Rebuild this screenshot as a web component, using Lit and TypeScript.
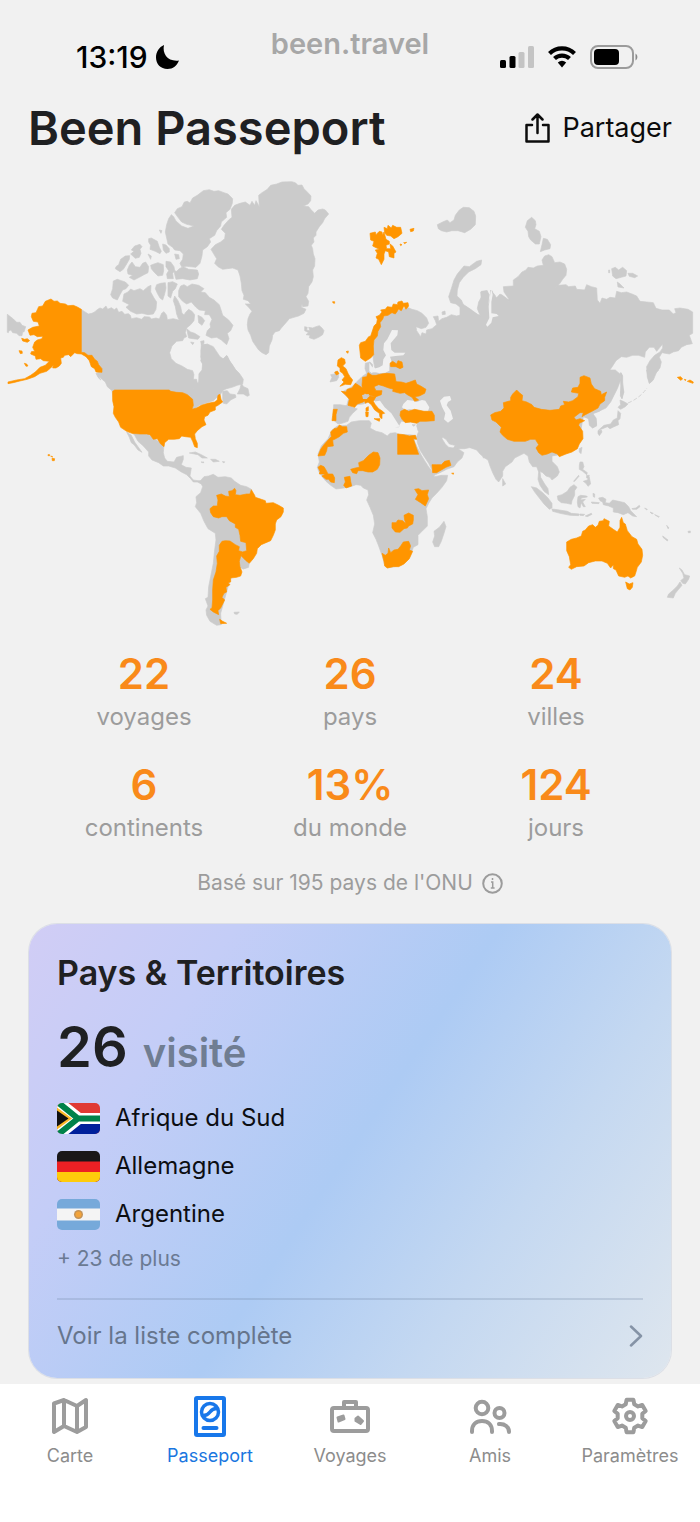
import { LitElement, html, svg, css } from "lit";
import { customElement, property } from "lit/decorators.js";

/** One sheet of the world map. Shapes are polygons on a grid three times finer than the map. */
interface Sheet {
  x: number;
  y: number;
  land?: string[];
  water?: string[];
  visited?: string[];
}

const SHEETS: Sheet[] = [
  {
    // Alaska and northern Canada
    x: 0,
    y: 170,
    land: [
      "22,433 40,447 50,457 60,457 66,466 77,470 72,486 68,485 66,497 57,497 50,490 38,488 33,480 27,482 25,488 22,487",
      "243,418 254,425 265,432 276,430 285,425 293,418 300,414 308,417 318,408 323,418 334,413 343,419 350,414 356,427 366,424 374,433 385,431 391,436 394,446 410,443 425,448 432,440 448,441 455,447 468,444 478,447 485,430 492,425 500,436 502,449 520,446 535,450 548,446 556,428 566,418 576,424 584,434 582,452 572,464 560,474 556,488 560,500 552,504 548,512 530,514 516,528 509,548 514,566 528,580 546,588 562,598 578,602 582,614 580,628 590,628 592,638 597,638 597,612 608,602 609,584 602,572 606,560 603,542 606,526 622,522 640,530 650,545 660,560 672,568 682,558 692,578 704,596 714,612 722,630 722,640 690,648 672,655 665,668 655,682 610,692 580,722 345,722 336,662 322,650 316,636 304,626 290,610 300,604 280,560 243,548",
      "610,62 628,59 642,64 656,62 672,68 684,72 698,86 697,100 690,118 678,128 680,142 664,156 662,168 650,182 644,196 628,206 632,216 622,230 608,240 606,258 600,280 588,292 560,289 545,290 540,280 548,268 550,252 540,242 524,240 518,232 504,222 500,204 496,186 500,164 506,146 514,134 521,140 528,153 545,168 564,175 582,168 560,163 545,156 534,142 524,128 532,116 546,110 553,96 562,94 570,99 578,84 592,76",
      "538,296 550,290 566,298 592,300 596,312 592,326 570,330 548,326 528,328 524,312 522,302 530,304",
      "446,206 454,204 472,214 478,232 484,244 480,251 466,244 450,238 452,226 446,216",
      "488,222 498,225 508,236 508,246 498,250 490,240",
      "394,240 404,228 420,223 426,230 420,238 423,250 418,262 406,265 392,252 402,244",
      "348,290 356,284 362,268 376,258 389,257 388,268 380,282 370,298 360,305 346,296",
      "382,300 388,286 396,276 406,290 420,292 428,280 437,276 446,290 444,308 432,314 418,322 402,330 388,322 398,316 384,312",
      "452,286 462,282 474,278 490,284 491,302 488,316 474,318 462,306 454,296",
      "498,274 512,276 522,290 524,302 518,310 520,326 502,326 500,312 506,302 498,290",
      "340,333 352,328 364,332 376,336 386,346 378,356 368,360 360,374 352,390 338,384 332,374 338,356",
      "372,372 384,366 392,357 402,362 420,356 430,362 444,350 453,346 452,366 462,384 470,396 468,418 460,432 444,434 426,430 410,432 392,424 378,412 388,404 368,394",
      "470,344 482,340 496,338 498,354 494,372 488,390 480,384 472,370 466,356",
      "504,338 518,335 532,342 526,356 518,364 512,384 504,378 504,358",
      "524,378 534,392 542,410 546,430 560,440 552,450 536,448 530,432 526,410 520,392",
      "542,348 552,344 562,350 576,342 596,346 612,356 602,366 616,368 628,382 642,390 658,404 664,422 668,436 686,450 699,466 692,482 682,490 687,506 680,524 664,510 650,502 634,504 618,496 622,482 632,472 630,462 636,448 628,434 614,434 616,422 598,420 588,412 574,396 560,402 548,394 536,380 536,362",
      "560,476 572,486 584,490 600,500 594,508 578,506 566,504",
      "594,436 606,442 614,452 606,466 596,458",
      "602,514 612,512 612,520 604,524",
      "572,516 582,518 578,524",
      "478,180 486,182 483,190",
      "444,252 454,258 452,268",
      "524,252 536,254 538,266 528,268",
      "288,610 296,616 302,630 294,622",
    ],
    visited: [
      "153,387 162,394 172,393 180,400 196,402 204,407 220,406 232,411 244,418 244,547 254,548 264,556 276,556 284,568 292,574 296,584 306,596 306,607 288,606 284,596 274,590 268,572 258,560 244,552 232,551 224,548 212,560 206,554 194,556 190,562 182,564 184,580 178,588 168,594 158,594 160,586 152,594 140,604 120,610 104,620 82,628 60,633 40,638 24,641 24,636 50,630 74,626 92,616 106,606 120,592 136,586 148,574 130,572 122,566 108,568 106,558 92,552 94,545 104,544 98,532 104,516 112,510 126,506 128,499 112,500 102,494 90,496 84,480 98,472 118,468 114,456 100,454 94,440 96,430 108,428 116,410 128,408 136,394",
      "65,505 74,508 82,506 89,512 82,517 68,513",
      "57,542 66,543 67,550 61,551",
      "73,580 80,582 84,588 78,589",
    ],
  },
  {
    // Greenland, Iceland and Labrador
    x: 180,
    y: 170,
    land: [
      "335,35 346,38 354,46 366,45 372,56 384,68 393,78 392,92 384,102 370,108 386,110 394,120 404,130 414,120 428,117 436,120 446,132 434,146 428,158 418,170 408,186 408,196 400,204 402,216 394,226 398,236 400,252 405,266 404,288 398,300 400,320 396,336 386,350 384,370 378,380 386,394 384,408 368,410 366,402 364,412 378,418 372,430 356,438 342,442 328,446 318,458 304,474 298,482 285,486 278,496 276,510 268,528 266,548 258,554 246,548 236,540 226,526 218,514 212,496 204,480 202,464 204,446 210,432 216,424 206,412 196,402 212,402 204,392 190,388 192,376 186,362 184,340 180,318 174,300 158,294 142,296 128,298 114,290 104,280 110,266 100,250 93,238 106,224 122,216 134,206 136,190 124,178 132,166 146,150 156,142 154,118 164,106 180,100 196,96 210,106 216,94 224,106 228,92 238,110 236,76 246,68 262,58 272,46 290,42 306,36",
      "374,470 382,472 380,480 390,482 386,472 398,474 408,470 418,467 426,474 432,482 428,494 416,502 402,508 388,503 390,496 378,494 386,488 374,482",
      "64,522 80,524 94,532 104,548 118,560 128,568 140,556 146,570 156,582 166,598 178,610 190,628 188,642 172,646 156,652 140,656 122,664 112,680 100,692 40,712 34,662 56,640 58,610 66,600 68,580 62,562",
      "128,664 142,662 150,672 166,674 168,682 152,690 140,702 130,700 128,686",
      "184,640 191,650 204,656 208,676 202,679 190,672 172,672 180,656",
      "450,636 456,622 452,614 464,612 466,604 474,606 476,622 470,632",
    ],
    visited: ["458,395 464,395 464,400 459,399", "498,545 505,543 504,550"],
  },
  {
    // Europe and the Barents Sea
    x: 320,
    y: 200,
    land: [
      "262,322 276,328 292,332 306,340 320,354 326,370 318,382 304,386 288,380 290,392 302,410 306,398 318,402 320,390 336,386 350,374 346,362 340,350 354,348 356,364 366,356 380,352 394,344 410,348 432,342 426,328 420,316 440,322 456,334 474,344 484,346 474,322 484,300 482,276 500,272 508,284 502,312 508,340 514,300 512,270 524,284 530,294 545,284 572,304 572,692 294,692 292,668 244,664 236,678 222,664 212,652 196,640 184,622 172,606 160,600 130,612 80,618 86,594 66,576 96,560 112,544 126,530 140,520 135,506 136,490 150,486 158,494 156,518 176,518 164,502 160,480 158,440 168,400 176,370 196,348 230,334",
      "41,614 60,614 90,619 112,627 98,640 88,652 84,664 66,670 54,672 40,660",
      "485,180 483,194 466,206 446,216 430,232 418,248 412,270 411,288 424,300 432,318 426,326 408,312 392,308 386,290 394,266 402,240 412,222 432,198 448,200 470,184",
      "430,22 448,23 462,34 467,48 466,74 452,88 434,98 414,92 396,92 380,96 364,92 355,86 352,74 368,66 382,60 390,68 402,60 406,46 418,30",
      "366,336 375,333 376,343 367,344",
    ],
    water: [
      "216,390 234,391 232,406 222,418 212,430 214,450 224,458 256,458 250,466 226,468 210,470 214,482 208,496 208,512 196,518 178,520 168,516 162,506 178,502 188,496 190,478 198,466 190,450 192,430 202,418 210,402",
      "250,612 262,600 280,602 290,606 306,600 316,602 328,622 324,634 300,632 270,628 256,630 246,622",
      "360,602 372,590 390,588 394,600 384,606 380,616 392,632 399,656 384,668 372,658 376,640 366,620",
      "168,604 180,602 194,622 214,640 232,668 240,680 220,682 196,660 180,632",
      "148,488 156,500 164,506 156,520 148,514",
    ],
    visited: [
      "118,436 122,428 136,424 146,410 152,408 158,390 162,378 170,370 172,358 168,350 178,346 186,336 182,330 196,328 202,320 216,322 220,312 232,314 234,306 246,303 250,310 264,308 266,318 258,328 252,318 244,332 236,328 226,342 216,338 204,346 192,348 188,358 180,368 182,380 174,394 172,408 162,420 160,438 161,464 152,474 136,484 122,474",
      "150,100 166,96 168,104 178,94 186,96 188,106 192,96 198,118 208,124 208,132 198,136 200,146 212,146 210,132 218,138 228,156 222,160 222,174 208,170 206,156 196,152 192,162 192,178 184,194 176,178 168,174 172,160 166,150 178,148 158,138 162,124 152,120",
      "192,82 202,86 204,76 214,84 218,76 230,82 242,82 246,100 234,110 222,116 212,108 200,106 194,98",
      "270,88 282,85 280,93 272,95",
      "240,132 246,134 242,137",
      "251,128 260,127 254,131",
      "54,480 64,473 74,478 76,490 68,498 78,506 84,520 90,530 98,540 92,554 76,553 60,559 72,546 66,540 74,530 68,520 60,514 60,504 52,498",
      "44,517 52,513 57,521 49,525",
      "64,574 78,576 82,568 96,564 106,550 116,556 130,566 138,574 130,586 140,596 130,606 112,612 104,622 84,616 88,598 76,584",
      "128,532 140,530 144,518 156,526 168,526 184,522 200,520 224,522 228,545 225,560 222,568 206,564 190,558 176,554 162,560 168,572 186,572 184,584 168,590 150,586 138,582 128,574 126,556",
      "132,598 144,594 150,588 168,590 160,604 166,614 176,626 188,634 194,640 186,642 186,656 180,652 178,640 164,630 154,614 144,606 136,610",
      "162,656 180,656 178,664",
      "138,624 145,620 145,632 138,634",
      "137,636 145,636 144,650 138,650",
      "228,545 244,546 258,550 270,546 286,540 290,552 302,558 318,568 314,580 298,588 284,590 296,600 284,604 276,592 262,584 254,578 240,580 218,574 222,558",
      "210,490 218,484 230,492 234,482 246,486 249,502 240,506 228,500 212,500",
      "242,634 254,628 266,634 284,628 312,634 336,634 343,646 343,662 318,664 300,664 290,670 272,666 256,668 246,658 240,646",
      "40,628 52,628 48,644 48,662 36,662 38,646",
    ],
  },
  {
    // Siberia and the Far East
    x: 460,
    y: 190,
    land: [
      "0,340 14,346 32,358 48,370 62,380 52,356 56,336 66,318 64,304 82,302 86,320 84,350 92,320 96,302 104,330 120,312 134,322 146,336 146,326 132,306 130,290 160,288 160,270 174,260 186,246 198,240 204,232 220,234 232,228 250,226 246,210 254,198 266,194 276,200 284,218 300,216 314,222 320,238 318,256 308,268 300,280 284,296 294,286 318,284 326,290 346,288 350,298 374,300 380,284 394,290 410,294 412,330 420,340 426,324 440,328 450,322 466,324 470,304 484,308 500,306 516,312 530,318 540,334 560,336 580,338 588,355 606,360 628,360 640,372 648,368 644,356 660,354 684,358 698,366 698,430 688,436 697,461 680,464 664,472 656,482 640,486 628,492 606,488 598,502 604,516 600,534 590,546 580,570 568,580 562,562 560,530 570,512 584,496 600,486 608,474 608,462 600,472 590,484 582,472 568,472 556,486 554,502 536,496 518,496 500,502 484,500 468,512 458,528 444,548 462,554 476,550 482,570 472,596 462,616 452,636 438,654 416,664 398,670 408,684 410,704 398,714 388,706 386,686 370,680 360,722 0,722",
      "215,82 226,92 228,104 224,116 238,124 243,140 238,162 226,162 212,150 206,140 204,124 196,112 202,92",
      "250,145 262,148 272,164 270,176 254,180 241,185 246,164",
      "455,236 466,232 476,240 488,232 500,242 498,258 484,262 468,266 458,258",
      "504,250 518,250 533,258 524,263 508,259",
      "472,276 480,282 492,294 474,291",
      "446,240 449,240 449,248 446,248",
      "481,548 487,556 486,590 492,606 486,626 481,618 483,590",
    ],
    water: ["94,298 98,314 94,336 94,370 110,372 116,378 98,382 94,398 82,410 78,404 88,384 86,350 90,320"],
  },
  {
    // The Americas
    x: 0,
    y: 380,
    land: [
      "396,158 440,160 466,178 492,196 490,218 494,234 502,244 522,246 530,232 550,227 550,238 544,254 558,262 574,264 570,288 580,300 594,302 606,302 604,312 592,306 580,306 572,296 560,284 544,276 526,264 506,258 490,258 476,248 456,240 446,228 446,216 430,198 414,184 404,166",
      "380,156 394,166 404,186 414,200 426,217 414,210 402,194 394,188 388,172",
      "568,219 586,216 604,224 622,234 606,234 594,224",
      "632,238 646,238 658,244 640,246",
      "603,246 612,246 610,249",
      "667,245 674,245 672,249",
      "600,304 612,290 626,288 640,283 654,292 676,290 694,294 704,304 722,316 740,320 754,328 758,350 700,400 752,500 746,562 730,567 716,560 690,600 662,700 664,734 650,736 630,724 620,706 618,690 624,678 616,656 624,652 626,620 632,590 640,550 644,510 648,480 646,460 624,446 612,424 602,400 586,380 590,368 588,350 602,338 608,320",
      "702,697 718,696 712,703 704,702",
      "720,532 736,542 747,552 742,562 730,566 718,558",
    ],
    visited: [
      "344,30 508,30 512,34 530,37 548,38 562,44 578,58 580,76 576,88 590,84 604,76 624,70 644,66 652,60 654,46 660,43 663,58 668,66 654,76 646,80 646,90 630,96 624,106 614,110 612,120 618,134 606,140 592,152 584,162 586,176 592,190 592,203 584,200 578,184 572,172 556,170 545,168 538,176 522,178 506,178 494,188 492,200 482,192 472,176 460,178 450,164 440,162 420,162 396,160 380,154 362,142 356,126 346,112 340,100 342,80 338,62 338,34",
      "630,386 640,378 652,378 654,360 650,346 664,342 676,348 688,350 686,334 696,332 704,325 708,332 706,344 720,346 740,342 750,342 754,329 764,346 766,352 784,358 796,362 798,370 820,368 836,376 850,384 850,396 843,410 830,420 826,432 826,450 820,466 812,482 798,488 784,494 772,506 770,520 760,536 748,550 738,542 724,528 728,516 740,512 738,488 722,484 720,466 716,448 706,442 706,432 688,422 680,410 666,410 656,414 640,410 632,398",
      "666,484 676,482 690,483 706,494 718,500 716,512 728,516 722,530 718,544 720,560 726,576 722,588 710,592 692,594 692,606 684,608 690,614 678,622 680,636 672,640 666,652 674,660 668,672 662,684 654,692 656,704 640,696 630,688 636,684 638,660 638,630 640,600 648,576 652,550 650,528 658,514 658,496",
      "659,718 668,724 680,730 662,731",
      "156,235 164,236 163,242 157,242",
      "144,224 149,224 149,227 144,227",
      "152,228 158,230 156,232",
    ],
  },
  {
    // Africa and the Middle East
    x: 300,
    y: 370,
    land: [
      "570,270 558,262 550,264 546,248 536,236 514,232 494,236 474,236 464,226 448,222 438,208 428,202 426,206 436,222 446,232 460,234 468,224 474,236 492,248 486,264 472,276 462,290 440,298 420,308 402,316 396,300 386,280 374,262 360,240 352,218 350,200 356,184 350,168 354,152 330,150 300,130 300,100 572,100",
      "140,166 154,156 178,152 208,152 214,160 210,174 228,184 246,188 262,198 270,190 286,188 300,194 326,194 346,196 352,206 342,210 352,232 362,252 374,272 384,288 396,304 404,320 424,316 443,316 440,332 426,352 410,370 396,384 386,400 378,416 382,440 382,468 366,484 354,496 354,524 340,532 334,550 324,570 306,584 284,590 262,594 254,584 246,556 236,528 228,508 218,488 224,462 220,436 210,412 200,390 206,374 204,360 190,354 182,346 168,344 152,350 132,354 108,357 92,346 78,334 66,320 56,304 52,292 58,276 54,252 64,228 84,206 96,180 112,168",
      "432,454 438,470 432,490 424,514 416,530 404,530 398,516 404,498 402,484 418,472",
      "286,166 298,168 296,171 286,170",
      "336,164 346,164 342,169",
    ],
    visited: [
      "118,165 128,170 140,170 142,186 130,190 118,200 104,208 98,210 100,228 82,230 80,242 74,256 54,258 62,238 72,224 86,208 94,200 92,186 102,176 112,174",
      "54,292 62,286 72,290 78,300 84,312 98,312 104,324 103,338 92,336 86,328 78,328 66,318 76,312 58,312 60,304",
      "133,322 150,319 152,334 155,348 138,354 131,346 136,336",
      "152,298 166,294 178,292 176,278 190,272 206,256 220,246 234,248 240,264 239,284 232,298 218,306 204,306 188,302 174,302 170,311 158,308",
      "293,192 312,194 328,198 346,196 350,208 340,206 348,230 356,253 293,253",
      "396,284 410,284 424,284 434,274 448,271 453,286 438,292 424,300 410,308 398,308",
      "455,310 461,309 460,313",
      "344,358 356,356 366,362 386,360 382,374 386,386 376,408 362,398 346,388 354,374",
      "276,458 288,458 294,450 308,452 318,462 314,450 312,436 326,429 340,436 340,450 338,462 326,468 322,474 312,476 300,487 286,486 276,474",
      "246,550 256,556 264,550 266,534 272,548 282,540 294,538 302,528 310,516 326,514 332,528 328,540 338,544 328,566 312,582 296,590 280,590 262,594 254,588 252,574",
    ],
  },
  {
    // Southern Asia and Oceania
    x: 470,
    y: 370,
    land: [
      "0,0 436,0 452,14 444,44 426,84 406,110 388,124 366,132 378,146 380,168 368,174 360,164 356,146 340,134 330,200 322,236 268,254 246,258 246,274 262,290 268,306 262,318 246,330 240,322 228,318 218,308 210,304 212,322 224,342 234,356 236,374 222,364 210,346 204,328 206,306 200,290 188,290 178,276 174,258 162,250 150,256 134,264 126,276 106,290 98,304 98,318 86,336 78,328 68,308 60,288 54,270 44,264 30,252 20,240 0,233",
      "98,326 107,342 98,348",
      "184,350 200,354 218,368 234,384 246,400 246,414 238,418 222,402 208,384 194,366",
      "246,417 268,420 292,424 304,430 328,432 326,437 300,436 270,430 248,424",
      "262,378 276,374 292,364 300,352 312,344 321,352 314,362 314,376 306,392 304,403 290,400 274,398 264,390",
      "324,380 332,376 350,378 352,381 334,384 332,390 346,388 338,396 346,410 340,410 334,398 330,414 324,410 322,396",
      "330,276 338,276 342,290 338,298 352,308 350,314 338,304 328,298 328,286",
      "340,334 352,330 358,322 362,342 354,349 348,340",
      "350,316 358,316 356,326 350,324",
      "311,334 326,316 327,319 314,334",
      "328,236 336,232 333,251 328,246",
      "369,370 374,372 374,382 370,380",
      "364,396 388,398 386,401 366,400",
      "386,384 398,382 408,388 406,398 418,400 428,390 446,394 464,398 476,410 482,422 500,440 488,438 474,428 460,434 444,428 430,426 430,414 416,408 400,404 398,396 390,392",
      "486,416 498,414 508,406 510,410 500,418 488,418",
      "346,438 364,430 366,433 352,440",
      "330,432 344,433 340,437 330,436",
      "524,414 532,418 530,420",
      "540,426 550,430 546,432",
      "554,434 568,440 566,442",
      "590,466 597,474 594,476",
      "578,498 594,510 592,513 580,503",
      "654,484 661,483 661,488 655,488",
      "628,594 636,600 644,614 659,618 656,628 646,642 638,640 632,632 642,624 638,610",
      "630,636 636,646 626,658 616,670 610,684 592,682 596,672 610,660 622,648",
      "450,90 460,94 474,102 466,110 452,118 444,112 452,104",
      "444,122 452,130 450,146 444,152 446,164 432,170 420,176 412,170 398,176 386,180 402,166 422,162 430,150 442,144",
      "384,182 394,180 396,186 388,197 384,190",
      "453,8 458,18 458,36 461,62 456,86 452,70 453,40",
      "530,0 566,0 552,14 546,34 538,40 534,20",
    ],
    visited: [
      "62,135 74,128 92,124 102,114 100,98 122,92 122,82 128,72 140,60 150,70 158,76 156,92 170,96 186,104 192,112 214,118 240,121 268,118 272,108 284,104 280,94 296,96 308,92 324,80 326,70 304,66 308,54 324,52 330,40 330,22 342,17 360,24 364,42 374,56 392,64 394,74 410,66 404,82 404,92 390,102 384,114 366,124 346,134 336,140 340,128 330,128 312,142 318,150 330,146 344,152 328,160 326,166 338,184 339,206 328,222 322,236 306,246 288,252 268,260 262,252 246,246 232,252 216,256 206,248 198,234 206,224 196,208 182,208 166,214 132,214 112,208 98,196 90,186 94,172 78,156 66,150",
      "290,516 304,508 320,504 334,498 338,484 346,480 356,468 368,464 376,472 384,466 388,454 400,452 402,446 418,454 416,468 430,478 442,486 450,472 450,452 455,442 460,458 466,462 472,482 486,500 500,508 504,522 516,538 518,556 514,576 502,592 498,606 494,618 482,624 474,618 464,622 446,618 438,600 430,596 430,584 422,594 412,580 396,573 376,573 356,578 342,588 320,590 304,598 296,592 302,584 298,560 290,542",
      "467,636 478,642 489,638 487,652 480,660 472,656",
      "622,22 632,20 638,27 632,31",
      "643,28 648,29 646,32",
      "652,34 660,30 670,36 669,40 660,37",
    ],
  },
];

const points = (kind: "land" | "water" | "visited") =>
  SHEETS.map(
    (s) => svg`<g class=${kind} transform="translate(${s.x} ${s.y}) scale(0.3333)">
      ${(s[kind] ?? []).map((p) => svg`<polygon points=${p}></polygon>`)}
    </g>`
  );

@customElement("world-map")
export class WorldMap extends LitElement {
  static styles = css`
    :host {
      display: block;
    }
    svg {
      display: block;
      width: 100%;
      height: auto;
      stroke-linejoin: round;
    }
    .land {
      fill: #cbcbcb;
      stroke: #cbcbcb;
      stroke-width: 2;
    }
    .lake {
      fill: #cbcbcb;
    }
    .water {
      fill: #f1f1f1;
    }
    .visited {
      fill: #ff9500;
      stroke: #ff9500;
      stroke-width: 2;
    }
    .kurils {
      fill: none;
      stroke: #cbcbcb;
      stroke-width: 0.8;
      stroke-dasharray: 4 2;
    }
  `;

  render() {
    return html`<svg viewBox="0 170 700 470" role="img" aria-label="Carte du monde">
      ${points("land")} ${points("water")} ${points("visited")}
      <polygon class="lake" points="362,395 369,394 367,399 363,399"></polygon>
      <path class="kurils" d="M628 403q12-5 19-15"></path>
    </svg>`;
  }
}

const polar = (r: number, deg: number) => {
  const a = ((deg - 90) * Math.PI) / 180;
  return `${(22 + r * Math.cos(a)).toFixed(2)} ${(22 + r * Math.sin(a)).toFixed(2)}`;
};
const gearPath =
  "M" +
  [0, 60, 120, 180, 240, 300]
    .map((d) => [polar(16.5, d - 12), polar(16.5, d + 12), polar(12.5, d + 20), polar(12.5, d + 40)].join("L"))
    .join("L") +
  "Z";

const ICONS = {
  carte: svg`<path d="M6 9.500 16 6l13 6 9-6v27l-9 5-13-6-10 6zM16 6v26M29 12v26"/>`,
  passeport: svg`<rect x="8" y="4" width="28" height="37" rx="1"/><circle cx="22" cy="18" r="8.500" stroke-width="3.500"/>
    <path d="M15.500 21.500c3.500 0 5-1.500 6.500-3.500s3.500-3.500 6.500-3.500" stroke-width="3.500"/><path d="M15.500 34h13"/>`,
  voyages: svg`<rect x="4" y="14" width="36" height="23" rx="2"/><path d="M16 13V8h12v5"/>
    <path class="solid" d="m9.500 23.500 6-2 1 3.500-6 2.500zM27.500 24.500l2.500-2 5 4.500-2.500 3-5-3z"/>`,
  amis: svg`<circle cx="14" cy="14" r="6.300"/><circle cx="31.500" cy="19" r="5"/>
    <path d="M4 38v-1c0-6 4-10 10-10s10 4 10 10v1M31 30c6-.5 10 3 10 8"/>`,
  parametres: svg`<path d=${gearPath}/><circle cx="22" cy="22" r="4"/>`,
};

@customElement("tab-item")
export class TabItem extends LitElement {
  @property() label = "";
  @property() icon: keyof typeof ICONS = "carte";
  @property({ type: Boolean }) active = false;

  static styles = css`
    :host {
      display: block;
      flex: 1;
      min-width: 0;
    }
    .tab {
      display: flex;
      flex-direction: column;
      align-items: center;
      gap: 6px;
      color: #8c8c8c;
      text-decoration: none;
      font-size: 18px;
      line-height: 24px;
    }
    svg {
      width: 44px;
      height: 44px;
      fill: none;
      stroke: #9c9c9c;
      stroke-width: 4;
      stroke-linejoin: round;
      stroke-linecap: round;
    }
    .solid {
      fill: #9c9c9c;
      stroke-width: 2;
    }
    .active {
      color: #1976e0;
    }
    .active svg {
      stroke: #1877ea;
    }
  `;

  render() {
    return html`<a class="tab ${this.active ? "active" : ""}" href="#${this.icon}" aria-current=${this.active ? "page" : "false"}>
      <svg viewBox="0 0 44 44" aria-hidden="true">${ICONS[this.icon]}</svg>
      <span>${this.label}</span>
    </a>`;
  }
}

const STATS = [
  ["22", "voyages"],
  ["26", "pays"],
  ["24", "villes"],
  ["6", "continents"],
  ["13%", "du monde"],
  ["124", "jours"],
];

const flagZA = svg`<rect width="43" height="31" fill="#e03a34"/><rect y="16" width="43" height="15" fill="#00209b"/>
  <path d="M0-2 22 15.500H43M0 33l22-17.500" stroke="#fff" stroke-width="11" fill="none"/>
  <path d="M-2-3 21 15.500H43M-2 34l23-18.500" stroke="#00824a" stroke-width="6" fill="none"/>
  <path d="M0 4.500 15 15.500 0 26.500z" fill="#fcb827"/><path d="M0 7.500 11.500 15.500 0 23.500z" fill="#111"/>`;
const flagDE = svg`<rect width="43" height="31" fill="#1a1718"/><rect y="10.500" width="43" height="21" fill="#ed2024"/><rect y="21" width="43" height="10" fill="#fecb0b"/>`;
const flagAR = svg`<rect width="43" height="31" fill="#76a9da"/><rect y="9.500" width="43" height="12" fill="#f4f4f4"/>
  <circle cx="21.500" cy="15.500" r="4.500" fill="#c39256"/><circle cx="21.500" cy="15.500" r="3" fill="#f2a33a"/>`;

const COUNTRIES = [
  { name: "Afrique du Sud", flag: flagZA },
  { name: "Allemagne", flag: flagDE },
  { name: "Argentine", flag: flagAR },
];

@customElement("app-root")
export class AppRoot extends LitElement {
  static styles = css`
    :host {
      display: flex;
      flex-direction: column;
      min-height: 100vh;
      background: #f1f1f1;
      color: #1f2022;
      font-family: Inter, "Liberation Sans", sans-serif;
    }
    * {
      box-sizing: border-box;
    }
    h1,
    h2,
    p,
    ul,
    dl,
    dd {
      margin: 0;
      padding: 0;
    }
    svg {
      display: block;
      flex: none;
    }
    button {
      display: flex;
      align-items: center;
      margin: 0;
      padding: 0;
      border: 0;
      background: none;
      color: inherit;
      font: inherit;
    }
    .status {
      display: grid;
      grid-template-columns: 1fr auto 1fr;
      padding: 28px 61px 0;
      height: 92px;
      color: #000;
    }
    .clock {
      display: flex;
      align-items: center;
      gap: 7px;
      height: 58px;
      padding-left: 15px;
      font-size: 30px;
      font-weight: 500;
    }
    .site {
      font-size: 29px;
      line-height: 32px;
      font-weight: 600;
      color: #a7a7a7;
    }
    .signals {
      display: flex;
      align-items: center;
      justify-content: flex-end;
      gap: 13px;
      height: 58px;
    }
    .heading {
      display: flex;
      align-items: center;
      justify-content: space-between;
      padding: 0 28px;
      height: 72px;
      margin-bottom: 6px;
    }
    h1 {
      font-size: 47px;
      line-height: 60px;
      font-weight: 600;
    }
    .share {
      gap: 12px;
      font-size: 27px;
      line-height: 32px;
      color: #0c0c0c;
    }
    .stats {
      display: grid;
      grid-template-columns: repeat(3, 1fr);
      row-gap: 25px;
      padding: 9px 41px 0;
      text-align: center;
    }
    .stat {
      display: flex;
      flex-direction: column-reverse;
    }
    .stat dt {
      font-size: 24px;
      line-height: 36px;
      color: #9c9c9c;
    }
    .stat dd {
      font-size: 42px;
      line-height: 50px;
      font-weight: 600;
      color: #f98a1a;
    }
    .note {
      display: flex;
      align-items: center;
      justify-content: center;
      gap: 9px;
      padding: 22px 0 26px;
      font-size: 21px;
      line-height: 30px;
      color: #9c9c9c;
    }
    .card {
      margin: 0 29px 6px;
      padding: 29px 28px 25px;
      border-radius: 28px;
      box-shadow: 0 0 0 1px #dcdfe6;
      background: linear-gradient(124deg, #d1cdf5 0%, #c4cdf7 22%, #adcbf4 50%, #c4d8f1 72%, #dee6ee 100%);
    }
    h2 {
      font-size: 34px;
      line-height: 40px;
      font-weight: 600;
    }
    .total {
      display: flex;
      align-items: baseline;
      gap: 15px;
      margin: 20px 0 15px;
      font-weight: 600;
      line-height: 68px;
    }
    .count {
      font-size: 56px;
    }
    .state {
      font-size: 40px;
      color: #707d92;
    }
    .countries {
      display: grid;
      gap: 16px;
      list-style: none;
    }
    .country {
      display: flex;
      align-items: center;
      gap: 15px;
      font-size: 24px;
      line-height: 32px;
      color: #0c0e12;
    }
    .flag {
      border-radius: 5px;
    }
    .more {
      margin: 14px 0 24px;
      font-size: 21px;
      line-height: 30px;
      color: #6b7a93;
    }
    .full {
      display: flex;
      align-items: center;
      justify-content: space-between;
      padding-top: 19px;
      border-top: 2px solid rgba(110, 130, 160, 0.24);
      font-size: 24px;
      line-height: 34px;
      color: #66758c;
      text-decoration: none;
    }
    .tabs {
      display: flex;
      flex: 1;
      padding-top: 10px;
      background: #fff;
    }
  `;

  render() {
    return html`
      <header>
        <div class="status">
          <div class="clock">
            <span>13:19</span>
            <svg width="25" height="24" viewBox="0 0 25 24" aria-hidden="true">
              <path d="M9 0C7 9 13 17 24 15.500 22 20.500 18 24 12.500 24 5.500 24 1 19 1 12.500 1 7 4 2 9 0z" fill="#000" />
            </svg>
          </div>
          <div class="site">been.travel</div>
          <div class="signals">
            <svg width="34" height="22" viewBox="0 0 34 22" aria-hidden="true">
              <rect y="14" width="6" height="8" rx="1.500" /><rect x="9.500" y="10" width="6" height="12" rx="1.500" />
              <rect x="18.500" y="6" width="6" height="16" rx="1.500" fill="#c4c4c4" /><rect x="28" y="0" width="6" height="22" rx="1.500" fill="#c4c4c4" />
            </svg>
            <svg width="30" height="22" viewBox="0 0 30 22" aria-hidden="true">
              <path d="M2.500 7.500a18 18 0 0 1 25 0M7.500 12.500a11 11 0 0 1 15 0" fill="none" stroke="#000" stroke-width="4.200" />
              <path d="M10.800 16.500a6.500 6.500 0 0 1 8.400 0L15 21.500z" />
            </svg>
            <svg width="49" height="24" viewBox="0 0 49 24" aria-hidden="true">
              <rect x="1" y="1" width="42" height="22" rx="7" fill="none" stroke="#9b9b9b" stroke-width="2" />
              <rect x="4" y="4" width="25" height="16" rx="4" /><path d="M45.500 8.500c2.500 1.500 2.500 5.500 0 7z" fill="#8a8a8a" />
            </svg>
          </div>
        </div>
        <div class="heading">
          <h1>Been Passeport</h1>
          <button class="share" type="button">
            <svg width="25" height="30" viewBox="0 0 25 30" fill="none" stroke="#0c0c0c" stroke-width="2.500" stroke-linejoin="round" stroke-linecap="round" aria-hidden="true">
              <path d="M7 12H1.500v16.500h22V12H18M12.500 20V2M7.500 6.500l5-5 5 5" />
            </svg>
            Partager
          </button>
        </div>
      </header>
      <main>
        <world-map></world-map>
        <dl class="stats">
          ${STATS.map(([value, name]) => html`<div class="stat"><dt>${name}</dt><dd>${value}</dd></div>`)}
        </dl>
        <p class="note">
          Basé sur 195 pays de l'ONU
          <button type="button" aria-label="Informations">
            <svg width="21" height="21" viewBox="0 0 21 21" fill="none" stroke="#9c9c9c" stroke-width="2" aria-hidden="true">
              <circle cx="10.500" cy="10.500" r="9.300" /><path d="M9 9h1.700v6M8.800 15h3.800M10.500 5v2" stroke-width="1.500" />
            </svg>
          </button>
        </p>
        <section class="card">
          <h2>Pays &amp; Territoires</h2>
          <p class="total"><span class="count">26</span><span class="state">visité</span></p>
          <ul class="countries">
            ${COUNTRIES.map(
              (c) => html`<li class="country">
                <svg class="flag" width="43" height="31" viewBox="0 0 43 31" aria-hidden="true">${c.flag}</svg>
                ${c.name}
              </li>`
            )}
          </ul>
          <p class="more">+ 23 de plus</p>
          <a class="full" href="#pays">
            Voir la liste complète
            <svg width="14" height="22" viewBox="0 0 14 22" fill="none" stroke="#8593a6" stroke-width="2.500" stroke-linecap="round" stroke-linejoin="round" aria-hidden="true">
              <path d="m2 1.500 10 9.500-10 9.500" />
            </svg>
          </a>
        </section>
      </main>
      <nav class="tabs" aria-label="Navigation principale">
        <tab-item icon="carte" label="Carte"></tab-item>
        <tab-item icon="passeport" label="Passeport" active></tab-item>
        <tab-item icon="voyages" label="Voyages"></tab-item>
        <tab-item icon="amis" label="Amis"></tab-item>
        <tab-item icon="parametres" label="Paramètres"></tab-item>
      </nav>
    `;
  }
}
